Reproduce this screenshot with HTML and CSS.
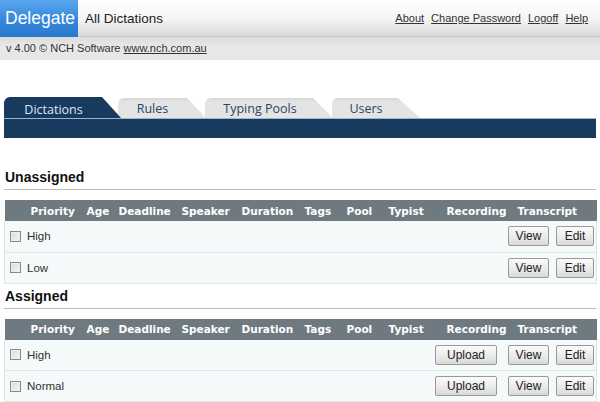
FILE: index.html
```html
<!DOCTYPE html>
<html lang="en">
<head>
  <meta charset="UTF-8">
  <title>Delegate | All Dictations</title>
  <link rel="stylesheet" href="styles.css">
</head>
<body>
  <div class="topbar">
    <div class="brand">Delegate</div>
    <div class="page-title">All Dictations</div>
    <div class="links">
      <a href="#">About</a>
      <a href="#">Change Password</a>
      <a href="#">Logoff</a>
      <a href="#">Help</a>
    </div>
  </div>
  <div class="subbar">v 4.00 &copy; NCH Software <a href="#">www.nch.com.au</a></div>

  <div class="tabs">
    <div class="tab active tab-dict">Dictations</div>
    <div class="tab tab-rules">Rules</div>
    <div class="tab tab-pools">Typing Pools</div>
    <div class="tab tab-users">Users</div>
  </div>
  <div class="tabbar"></div>

  <h2 class="section-title first">Unassigned</h2>
  <table class="list">
    <colgroup>
      <col style="width:78px"><col style="width:32px"><col style="width:63px"><col style="width:60px"><col style="width:63px">
      <col style="width:42px"><col style="width:42px"><col style="width:58px"><col style="width:71px"><col style="width:83px">
    </colgroup>
    <tr class="head">
      <th class="th-first">Priority</th><th>Age</th><th>Deadline</th><th>Speaker</th><th>Duration</th>
      <th>Tags</th><th>Pool</th><th>Typist</th><th>Recording</th><th>Transcript</th>
    </tr>
    <tr class="row">
      <td colspan="10"><div class="cell">
        <span class="check"></span><span class="prio">High</span>
        <span class="actions"><button class="btn b-view">View</button><button class="btn b-edit">Edit</button></span>
      </div></td>
    </tr>
    <tr class="row">
      <td colspan="10"><div class="cell">
        <span class="check"></span><span class="prio">Low</span>
        <span class="actions"><button class="btn b-view">View</button><button class="btn b-edit">Edit</button></span>
      </div></td>
    </tr>
  </table>

  <h2 class="section-title">Assigned</h2>
  <table class="list">
    <colgroup>
      <col style="width:78px"><col style="width:32px"><col style="width:63px"><col style="width:60px"><col style="width:63px">
      <col style="width:42px"><col style="width:42px"><col style="width:58px"><col style="width:71px"><col style="width:83px">
    </colgroup>
    <tr class="head">
      <th class="th-first">Priority</th><th>Age</th><th>Deadline</th><th>Speaker</th><th>Duration</th>
      <th>Tags</th><th>Pool</th><th>Typist</th><th>Recording</th><th>Transcript</th>
    </tr>
    <tr class="row">
      <td colspan="10"><div class="cell">
        <span class="check"></span><span class="prio">High</span>
        <span class="actions"><button class="btn b-upload">Upload</button><button class="btn b-view">View</button><button class="btn b-edit">Edit</button></span>
      </div></td>
    </tr>
    <tr class="row">
      <td colspan="10"><div class="cell">
        <span class="check"></span><span class="prio">Normal</span>
        <span class="actions"><button class="btn b-upload">Upload</button><button class="btn b-view">View</button><button class="btn b-edit">Edit</button></span>
      </div></td>
    </tr>
  </table>
</body>
</html>
```

FILE: styles.css
```css
* {
  margin: 0;
  padding: 0;
  box-sizing: border-box;
}
body {
  background: #fff;
  font-family: "Liberation Sans", Arial, sans-serif;
  color: #222;
  overflow: hidden;
}
.topbar {
  height: 37px;
  display: flex;
  align-items: center;
  background: linear-gradient(#ffffff, #f4f4f4 55%, #d9d9d9);
  border-bottom: 1px solid #c8c8c8;
}
.brand {
  width: 78px;
  height: 37px;
  line-height: 36px;
  padding-left: 5px;
  color: #fff;
  font-size: 17.5px;
  background: linear-gradient(#5aa6ee, #3587dc 55%, #2a78cc);
}
.page-title {
  margin-left: 7px;
  font-size: 13.5px;
  color: #222;
}
.links {
  margin-left: auto;
  margin-right: 12px;
  display: flex;
  gap: 7px;
  font-size: 11px;
}
.links a, .subbar a {
  color: #333;
}
.subbar {
  height: 23px;
  line-height: 23px;
  padding-left: 6px;
  font-size: 11px;
  color: #333;
  background: linear-gradient(#dcdcdc, #e8e8e8 40%, #e6e6e6);
}
.tabs {
  margin-top: 37px;
  margin-left: 4px;
  height: 21px;
  display: flex;
  align-items: flex-end;
  font-family: "Open Sans", sans-serif;
  font-size: 12.5px;
}
.tab {
  height: 20px;
  line-height: 22px;
  text-align: center;
  color: #2c4666;
  background: linear-gradient(#d6d6d6, #e4e4e4 20%, #e4e4e4);
  border-top-left-radius: 6px;
  position: relative;
}
.tab.active {
  height: 21px;
  line-height: 26px;
  color: #dfe7f0;
  background: #173a5e;
  z-index: 5;
}
.tab-dict {
  width: 117px;
  padding-right: 18px;
  clip-path: polygon(0 0, 98px 0, 100% 100%, 0 100%);
}
.tab-rules {
  width: 88px;
  margin-left: -3px;
  padding-right: 19px;
  clip-path: polygon(0 0, 69px 0, 100% 100%, 0 100%);
  z-index: 4;
}
.tab-pools {
  width: 128px;
  margin-left: -1px;
  padding-right: 18px;
  clip-path: polygon(0 0, 108px 0, 100% 100%, 0 100%);
  z-index: 3;
}
.tab-users {
  width: 88px;
  margin-left: -1px;
  padding-right: 20px;
  clip-path: polygon(0 0, 66px 0, 100% 100%, 0 100%);
  z-index: 2;
}
.tabbar {
  height: 20px;
  margin: 0 4px;
  background: #173a5e;
  border-top: 1px solid #9fb4c8;
}
.section-title {
  margin: 31px 4px 0;
  padding: 0 1px 3px;
  font-size: 14px;
  line-height: 17px;
  font-weight: bold;
  color: #111;
  border-bottom: 1px solid #bdbdbd;
}
.section-title + .list {
  margin-top: 10px;
}
.list + .section-title {
  margin-top: 4px;
}
.list {
  width: 592px;
  margin-left: 4px;
  border-collapse: collapse;
  table-layout: fixed;
}
.head th {
  height: 21px;
  padding-left: 4px;
  text-align: left;
  background: #6f7a80;
  color: #fff;
  font-family: "DejaVu Sans", Verdana, sans-serif;
  font-size: 10.5px;
  font-weight: bold;
  white-space: nowrap;
}
.head th.th-first {
  padding-left: 26px;
}
.row td {
  height: 31px;
  background: #f4f9fa;
  border: 1px solid #dfe6e8;
  border-top: none;
  padding: 0;
}
.cell {
  display: flex;
  align-items: center;
  padding-left: 5px;
  padding-right: 2px;
}
.check {
  width: 11px;
  height: 11px;
  border: 1px solid #8a8a8a;
  background: linear-gradient(135deg, #dadada, #f6f6f6);
  box-shadow: inset 0 0 0 1px #efefef;
}
.prio {
  margin-left: 6px;
  font-size: 11.5px;
  color: #333;
}
.actions {
  margin-left: auto;
  display: flex;
  gap: 7px;
}
.btn {
  height: 20px;
  font-family: "Liberation Sans", Arial, sans-serif;
  font-size: 12px;
  color: #222;
  background: linear-gradient(#fbfbfb, #e9e9e9 60%, #d8d8d8);
  border: 1px solid #999;
  border-radius: 2px;
}
.b-upload {
  width: 62px;
  margin-right: 4px;
}
.b-view {
  width: 41px;
}
.b-edit {
  width: 38px;
}
```
